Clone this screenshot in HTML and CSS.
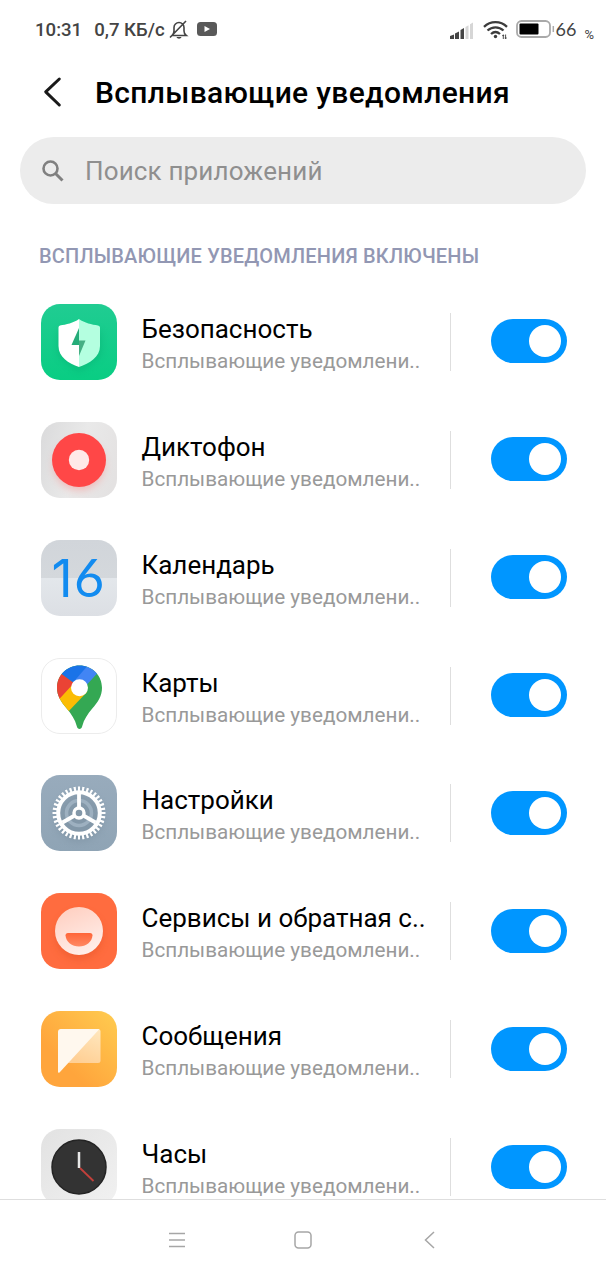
FILE: index.html
```html
<!DOCTYPE html>
<html lang="ru">

<head>
	<meta charset="UTF-8">
	<meta name="viewport" content="width=device-width, initial-scale=1.0">
	<title>Всплывающие уведомления</title>

	<link rel="stylesheet" href="styles.css">
</head>

<body>
	<div class="status">
		<span class="status__time">10:31</span>
		<span class="status__speed">0,7 КБ/с</span>
		<svg class="status__bell" width="20" height="20" viewBox="0 0 20 20" fill="none" stroke="#444" stroke-width="1.6">
			<path d="M3 15.500c1.300-1.200 2-2.400 2-4.500V7.500a5 5 0 0 1 10 0V11c0 2 .5 3.200 2.200 4.500zM1 17.500 17 1" />
			<path d="M7.500 17h5c-.6 2.300-4.400 2.300-5 0z" fill="#444" stroke="none" />
		</svg>
		<svg class="status__video" width="20" height="14" viewBox="0 0 20 14">
			<rect width="20" height="14" rx="3.500" fill="#595959" />
			<path d="M7.500 4v6l5.500-3z" fill="#fff" />
		</svg>
		<svg class="status__signal" width="24" height="17" viewBox="0 0 24 17">
			<path d="M0 14l4-1.500V17H0zM5 11.500l4-2V17H5zM10.500 8l3.500-2v11h-3.500z" fill="#444" />
			<path d="M15.500 5l3-1.700V17h-3zM20 2.300 23 .5V17h-3z" fill="#d6d6d6" />
		</svg>
		<svg class="status__wifi" width="25" height="20" viewBox="0 0 25 20" fill="none" stroke="#3c3c3c" stroke-width="2.300">
			<path d="M1 6.800c6.500-6.200 16.500-6.200 23 0M4.500 10.500c4.600-4.300 11.400-4.300 16 0M8 14c2.800-2.500 6.200-2.500 9 0" />
			<circle cx="12.500" cy="16.500" r="1.700" fill="#3c3c3c" stroke="none" />
			<path d="M20.300 19v-4.500M22.600 14.500V19M19.200 15.600h2M21.700 18h2" stroke-width=".9" />
		</svg>
		<svg class="status__battery" width="39" height="18" viewBox="0 0 39 18">
			<rect x="1" y="1" width="33" height="16" rx="4.500" fill="#fff" stroke="#a9a9a9" stroke-width="1.800" />
			<rect x="3.500" y="3.500" width="19" height="11" rx="1" fill="#000" />
			<path d="M37.300 6v6" stroke="#aaa" stroke-width="1.500" />
		</svg>
		<span class="status__level">66</span>
		<span class="status__percent">%</span>
	</div>

	<header class="header">
		<svg class="header__back" width="20" height="32" viewBox="0 0 20 32" fill="none" stroke="#1a1a1a" stroke-width="3" stroke-linecap="round" stroke-linejoin="round">
			<path d="M16.300 3 2.700 15.800 16.300 29" />
		</svg>
		<h1>Всплывающие уведомления</h1>
	</header>

	<div class="search">
		<svg width="22" height="22" viewBox="0 0 22 22" fill="none" stroke="#808080" stroke-width="2.600">
			<circle cx="8.500" cy="8.500" r="7" />
			<path d="m13.500 13.500 7 7" stroke-width="3" />
		</svg>
		<input type="text" class="search__input" placeholder="Поиск приложений">
	</div>

	<h2>ВСПЛЫВАЮЩИЕ УВЕДОМЛЕНИЯ ВКЛЮЧЕНЫ</h2>

	<main class="apps">
		<div class="app">
			<svg class="app__icon" viewBox="0 0 76 76">
				<defs>
					<linearGradient id="green" x1="0" y1="0" x2="0" y2="1">
						<stop offset="0" stop-color="#20cc92" />
						<stop offset="1" stop-color="#09cd83" />
					</linearGradient>
					<filter id="blur" x="-30%" y="-30%" width="160%" height="160%">
						<feGaussianBlur stdDeviation="4" />
					</filter>
				</defs>
				<rect width="76" height="76" rx="19" fill="url(#green)" />
				<path d="M18 27h41v24L38 67 18 51z" fill="#0a9b66" opacity=".4" filter="url(#blur)" />
				<path d="M38 15c-5.500 4-13 5.500-19 6.500q-1.500.3-1.500 2V42c0 11 10 17.500 20.500 21z" fill="#fff" />
				<path d="M38 15c5.500 4 13 5.500 19 6.500q2 .3 2 2V42c0 11-10.500 17.500-21 21z" fill="#b4ffe0" />
				<path d="M38 24v17h-7.500z" fill="#25ac79" />
				<path d="M38 24v12.500h6.500L38 52z" fill="#46af84" />
			</svg>
			<div class="app__text">
				<div class="app__name">Безопасность</div>
				<div class="app__info">Всплывающие уведомлени..</div>
			</div>
			<div class="app__line"></div>
			<button class="toggle"></button>
		</div>

		<div class="app">
			<svg class="app__icon" viewBox="0 0 76 76">
				<defs>
					<linearGradient id="silver" x1="0" y1=".3" x2="1" y2=".6">
						<stop offset="0" stop-color="#dcdcdd" />
						<stop offset=".5" stop-color="#e9e9e9" />
						<stop offset="1" stop-color="#e4e2e2" />
					</linearGradient>
				</defs>
				<rect width="76" height="76" rx="19" fill="url(#silver)" />
				<circle cx="38" cy="43" r="25" fill="#ff6c69" opacity=".4" filter="url(#blur)" />
				<circle cx="38" cy="38" r="27" fill="#ff4747" />
				<circle cx="38" cy="38" r="10.200" fill="#ffe9e8" />
			</svg>
			<div class="app__text">
				<div class="app__name">Диктофон</div>
				<div class="app__info">Всплывающие уведомлени..</div>
			</div>
			<div class="app__line"></div>
			<button class="toggle"></button>
		</div>

		<div class="app">
			<svg class="app__icon" viewBox="0 0 76 76">
				<defs>
					<linearGradient id="page" x1="0" y1="0" x2="0" y2="1">
						<stop offset="0" stop-color="#d1d5da" />
						<stop offset=".5" stop-color="#d4d8dc" />
						<stop offset=".5" stop-color="#e3e7eb" />
						<stop offset="1" stop-color="#dcdfe4" />
					</linearGradient>
				</defs>
				<rect width="76" height="76" rx="19" fill="url(#page)" />
				<text class="calendar-day" y="56.500"><tspan class="calendar-day__one" x="10.500">1</tspan><tspan x="33">6</tspan></text>
			</svg>
			<div class="app__text">
				<div class="app__name">Календарь</div>
				<div class="app__info">Всплывающие уведомлени..</div>
			</div>
			<div class="app__line"></div>
			<button class="toggle"></button>
		</div>

		<div class="app">
			<svg class="app__icon" viewBox="0 0 76 76">
				<defs>
					<clipPath id="pin">
						<path d="M38.500 7.500C26 7.500 16 17.300 16 29.800c0 8 4 14 9.500 20.500 5 6 8.500 11 10.300 18 .8 3.700 4.600 3.700 5.400 0 1.800-7 5.300-12 10.300-18C57 44 61 38 61 29.800 61 17.300 51 7.500 38.500 7.500z" />
					</clipPath>
				</defs>
				<rect x=".5" y=".5" width="75" height="75" rx="18.500" fill="#fff" stroke="#ececec" />
				<g clip-path="url(#pin)">
					<path d="M10 0h60v76H10z" fill="#34a853" />
					<path d="M32 23.500 46 34 25 56 8 50z" fill="#fbbc04" />
					<path d="M8 4 21 16l12 9-16.500 18H8z" fill="#ea4335" />
					<path d="M18 14 22 0h32L33 25z" fill="#1a73e8" />
					<path d="M49 5 66 0 57.500 14 41 32l-9-7.500z" fill="#4285f4" />
				</g>
				<circle cx="38.500" cy="29.800" r="8.500" fill="#fff" />
			</svg>
			<div class="app__text">
				<div class="app__name">Карты</div>
				<div class="app__info">Всплывающие уведомлени..</div>
			</div>
			<div class="app__line"></div>
			<button class="toggle"></button>
		</div>

		<div class="app">
			<svg class="app__icon" viewBox="0 0 76 76">
				<defs>
					<linearGradient id="steel" x1="0" y1="0" x2="0" y2="1">
						<stop offset="0" stop-color="#98abbc" />
						<stop offset="1" stop-color="#8fa4b5" />
					</linearGradient>
				</defs>
				<rect width="76" height="76" rx="19" fill="url(#steel)" />
				<circle cx="38" cy="42" r="24" fill="#6c8192" opacity=".4" filter="url(#blur)" />
				<circle cx="38" cy="38" r="12.500" fill="none" stroke="#9db0c0" stroke-width="3.500" />
				<g fill="none" stroke="#fff">
					<circle cx="38" cy="38" r="20.800" stroke-width="4" />
					<circle cx="38" cy="38" r="24.300" stroke-width="4.400" pathLength="72" stroke-dasharray="1 1" stroke-dashoffset=".5" />
					<circle cx="38" cy="38" r="5" stroke-width="3.400" />
					<path d="M38 32V19M32.800 41 21.500 47.500M43.200 41 54.500 47.500" stroke-width="3.800" />
				</g>
			</svg>
			<div class="app__text">
				<div class="app__name">Настройки</div>
				<div class="app__info">Всплывающие уведомлени..</div>
			</div>
			<div class="app__line"></div>
			<button class="toggle"></button>
		</div>

		<div class="app">
			<svg class="app__icon" viewBox="0 0 76 76">
				<defs>
					<linearGradient id="face" x1=".3" y1="0" x2=".7" y2="1">
						<stop offset="0" stop-color="#ffd0c2" />
						<stop offset="1" stop-color="#fff0ec" />
					</linearGradient>
					<linearGradient id="smile" x1="0" y1="0" x2="0" y2="1">
						<stop offset="0" stop-color="#ff6538" />
						<stop offset="1" stop-color="#ff8964" />
					</linearGradient>
				</defs>
				<rect width="76" height="76" rx="19" fill="#ff6c3f" />
				<circle cx="38" cy="43" r="23" fill="#d9481e" opacity=".4" filter="url(#blur)" />
				<circle cx="38" cy="38" r="24" fill="url(#face)" />
				<path d="M27 40h22q2.500 0 2.500 2.500C51 49 45 53.500 38 53.500S25 49 24.500 42.500Q24.500 40 27 40z" fill="url(#smile)" />
			</svg>
			<div class="app__text">
				<div class="app__name">Сервисы и обратная с..</div>
				<div class="app__info">Всплывающие уведомлени..</div>
			</div>
			<div class="app__line"></div>
			<button class="toggle"></button>
		</div>

		<div class="app">
			<svg class="app__icon" viewBox="0 0 76 76">
				<defs>
					<linearGradient id="amber" x1="1" y1="0" x2=".3" y2=".7">
						<stop offset="0" stop-color="#ffcc50" />
						<stop offset="1" stop-color="#ffa53c" />
					</linearGradient>
					<linearGradient id="bubble" x1="1" y1="0" x2=".5" y2="1">
						<stop offset="0" stop-color="#ffe8bf" />
						<stop offset="1" stop-color="#ffcf94" />
					</linearGradient>
				</defs>
				<rect width="76" height="76" rx="19" fill="url(#amber)" />
				<path d="M19 18h38q2.500 0 2.500 2.500v29q0 2.500-2.500 2.500H27.500z" fill="url(#bubble)" />
				<path d="M20 18h38.500L18.500 61.500q-1.500 1-1.500-1V21q0-3 3-3z" fill="#fff8ee" />
			</svg>
			<div class="app__text">
				<div class="app__name">Сообщения</div>
				<div class="app__info">Всплывающие уведомлени..</div>
			</div>
			<div class="app__line"></div>
			<button class="toggle"></button>
		</div>

		<div class="app">
			<svg class="app__icon" viewBox="0 0 76 76">
				<defs>
					<linearGradient id="case" x1="0" y1="0" x2="1" y2="1">
						<stop offset="0" stop-color="#e2e2e2" />
						<stop offset="1" stop-color="#f1f1f1" />
					</linearGradient>
				</defs>
				<rect width="76" height="76" rx="19" fill="url(#case)" />
				<circle cx="38" cy="38" r="27" fill="#333" stroke="#242424" stroke-width="1.500" />
				<path d="M38 23v16" stroke="#e8e8e8" stroke-width="2.500" />
				<path d="m39 39 13.500 13" stroke="#c2403b" stroke-width="1.800" />
			</svg>
			<div class="app__text">
				<div class="app__name">Часы</div>
				<div class="app__info">Всплывающие уведомлени..</div>
			</div>
			<div class="app__line"></div>
			<button class="toggle"></button>
		</div>
	</main>

	<nav class="navbar">
		<svg width="18" height="18" viewBox="0 0 18 18" fill="none" stroke="#a6a6a6" stroke-width="1.500">
			<path d="M1 2.500h16M1 9h16M1 15.500h16" />
		</svg>
		<svg width="18" height="18" viewBox="0 0 18 18" fill="none" stroke="#a6a6a6" stroke-width="1.500">
			<rect x="1" y="1" width="16" height="16" rx="3.500" />
		</svg>
		<svg width="18" height="18" viewBox="0 0 18 18" fill="none" stroke="#a6a6a6" stroke-width="1.500">
			<path d="M14 1 5.500 9l8.500 8" />
		</svg>
	</nav>
</body>

</html>
```
FILE: styles.css
```css
* {
	box-sizing: border-box;
}

body {
	font-family: Roboto, sans-serif;
	margin: 0;
	height: 1280px;
	display: flex;
	flex-direction: column;
	overflow: hidden;
	background-color: #fff;
	color: #000;
}

h1 {
	margin: 2px 0 0 32px;
	font-size: 30px;
	font-weight: 500;
	line-height: 40px;
	white-space: nowrap;
	letter-spacing: 0.33px;
}

h2 {
	margin: 39px 0 0 39px;
	font-size: 20px;
	font-weight: 500;
	line-height: 26px;
	letter-spacing: 0.18px;
	white-space: nowrap;
	color: #9297b3;
}

svg {
	display: block;
	flex: none;
}

.status {
	display: flex;
	align-items: center;
	height: 60px;
	padding: 0 12px 0 35px;
	font-size: 18.6px;
	font-weight: 500;
	white-space: nowrap;
	color: #444;
}

.status__speed {
	margin-left: 12px;
}

.status__bell {
	margin-left: 4px;
}

.status__video {
	margin: -2px 0 0 8px;
}

.status__signal {
	margin-left: auto;
}

.status__wifi {
	margin-left: 9px;
}

.status__battery {
	margin: -2px 0 0 8px;
}

.status__level {
	width: 20px;
	margin-top: -2px;
	font-family: Lato, sans-serif;
	font-size: 18px;
	font-weight: 400;
}

.status__percent {
	padding: 8px 0 0 9px;
	font-size: 13px;
	font-weight: 400;
}

.header {
	display: flex;
	align-items: center;
	height: 64px;
	padding-left: 43px;
}

.search {
	display: flex;
	align-items: center;
	height: 67px;
	margin: 13px 20px 0;
	padding-left: 22px;
	border-radius: 34px;
	background-color: #ececec;
}

.search__input {
	flex: 1;
	margin-left: 21px;
	padding: 0;
	border: none;
	outline: none;
	background: none;
	font-family: inherit;
	font-size: 26px;
	letter-spacing: 0.15px;
}

.search__input::placeholder {
	color: #8f8f8f;
}

.apps {
	flex: 1;
	min-height: 0;
	padding-top: 14px;
	overflow: hidden;
}

.app {
	display: flex;
	align-items: center;
	height: 117.88px;
	padding-left: 41px;
}

.app__icon {
	width: 76px;
	height: 76px;
}

.app__text {
	width: 309px;
	padding: 4px 0 0 24.5px;
	white-space: nowrap;
}

.app__name {
	font-size: 26px;
	line-height: 34px;
}

.app__info {
	font-size: 20.7px;
	line-height: 30px;
	color: #999;
}

.app__line {
	width: 1px;
	height: 58px;
	margin-left: 24px;
	background-color: #dedede;
}

.toggle {
	display: flex;
	justify-content: flex-end;
	align-items: center;
	width: 76px;
	height: 44px;
	margin: -1px 0 0 40px;
	padding: 0 6px;
	border: none;
	border-radius: 22px;
	background-color: #0096ff;
	cursor: pointer;
}

.toggle::after {
	content: "";
	width: 32px;
	height: 32px;
	border-radius: 50%;
	background-color: #fff;
}

.calendar-day {
	font-family: Lato, sans-serif;
	font-size: 52px;
	fill: #128bf0;
}

.calendar-day__one {
	font-family: Inter, sans-serif;
}

.navbar {
	display: flex;
	justify-content: space-between;
	align-items: center;
	height: 81px;
	padding: 0 168px;
	border-top: 1px solid #dedede;
}
```
